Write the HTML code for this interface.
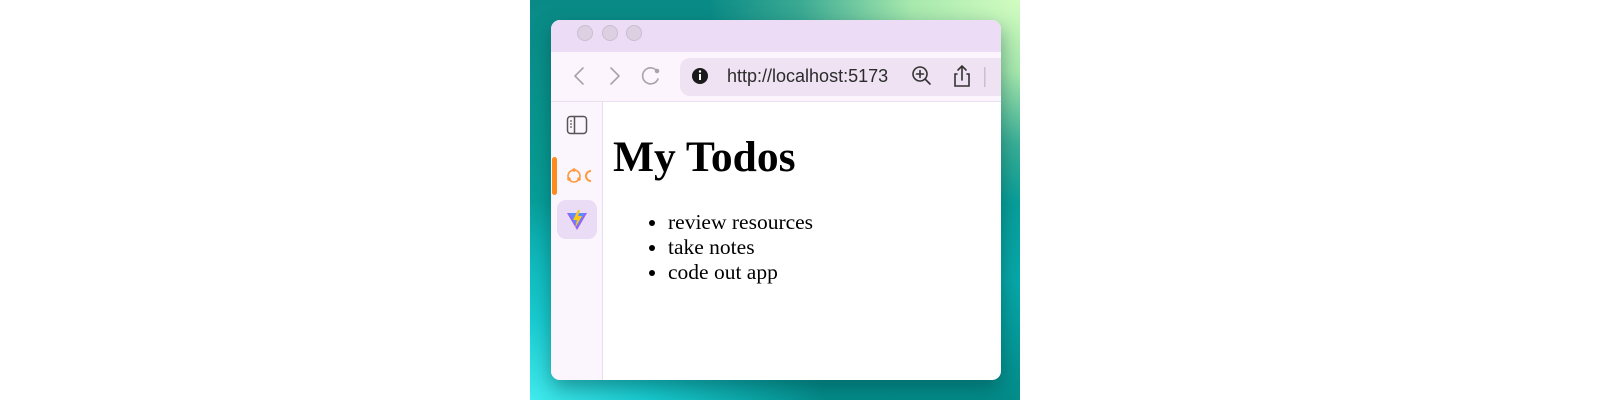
<!DOCTYPE html>
<html><head><meta charset="utf-8"><style>
body{margin:0;width:1600px;height:400px;background:#fff;position:relative;overflow:hidden}
.bg{position:absolute;left:530px;top:0;width:490px;height:400px;overflow:hidden;
background:
radial-gradient(ellipse 75% 60% at 100% 0%,#d2fcc0 0%,#a6e8ad 30%,rgba(90,190,155,0.6) 60%,rgba(60,170,150,0) 85%),
radial-gradient(ellipse 60% 50% at 0% 100%,#40eaee 0%,#18cdd2 40%,rgba(10,190,195,0) 100%),
linear-gradient(180deg,#0a8a86 0%,#079a92 40%,#07a8aa 70%,#038c8a 100%)}
.win{position:absolute;left:551px;top:20px;width:450px;height:360px;border-radius:9px;overflow:hidden;background:#fff;box-shadow:0 8px 20px rgba(0,60,60,.45)}
.title{position:absolute;left:0;top:0;right:0;height:32px;background:#ecdcf6}
.dot{position:absolute;top:5px;width:14px;height:14px;border-radius:50%;background:#dcd0e2;border:.5px solid #c9bdd0}
.tool{position:absolute;left:0;top:32px;right:0;height:49px;background:#fcf5fd;border-bottom:1px solid #eadff0}
.url{position:absolute;left:129px;top:6px;width:360px;height:38px;border-radius:10px;background:#eee2f3}
.side{position:absolute;left:0;top:82px;width:51px;bottom:0;background:#fbf5fd;border-right:1px solid #ecdcef}
.content{position:absolute;left:52px;top:82px;right:0;bottom:0;font-family:"Liberation Serif",serif;color:#000}
h1{position:absolute;left:10px;top:30px;margin:0;font-size:43.5px;font-weight:bold;white-space:nowrap}
ul{position:absolute;left:65px;top:108px;margin:0;padding:0;font-size:21.5px;line-height:25px;white-space:nowrap}
</style></head><body>
<div class="bg"></div>
<div class="win">
 <div class="title">
  <div class="dot" style="left:26px"></div><div class="dot" style="left:51px"></div><div class="dot" style="left:75px"></div>
 </div>
 <div class="tool">
  <svg style="position:absolute;left:0;top:0" width="460" height="49" fill="none" stroke="#a9a2ad" stroke-width="1.6" stroke-linecap="round" stroke-linejoin="round">
   <path d="M32 16 L24 24 L32 32"/>
   <path d="M60 16 L68 24 L60 32"/>
   <path d="M106 19 A8 8 0 1 0 107 27"/><circle cx="106" cy="19" r="1.5" fill="#a9a2ad"/>
  </svg>
  <div class="url">
   <svg style="position:absolute;left:0;top:0" width="360" height="38">
    <circle cx="20" cy="18" r="8" fill="#1a1a1a"/>
    <rect x="19" y="16" width="2" height="6" fill="#fff"/><circle cx="20" cy="13.5" r="1.2" fill="#fff"/>
    <g fill="none" stroke="#333" stroke-width="1.6" stroke-linecap="round">
     <circle cx="240" cy="16" r="7"/><path d="M245 21 L250 26 M240 12.5 V19.5 M236.5 16 H243.5"/>
     <path d="M277 16 H275 V28 H289 V16 H287 M282 22 V8 M278 12 L282 8 L286 12"/>
    </g>
    <rect x="304" y="9" width="1.5" height="20" fill="#c9c0cc"/>
   </svg>
   <div style="position:absolute;left:47px;top:8px;font:18px 'Liberation Sans',sans-serif;color:#2b2b2b">http://localhost:5173</div>
  </div>
 </div>
 <div class="side">
  <svg style="position:absolute;left:0;top:0" width="51" height="170">
   <rect x="16.5" y="14.5" width="19" height="17" rx="3" fill="none" stroke="#555" stroke-width="1.5"/>
   <path d="M23.5 15 V31" stroke="#555" stroke-width="1.5"/>
   <circle cx="20" cy="19" r=".9" fill="#555"/><circle cx="20" cy="22" r=".9" fill="#555"/><circle cx="20" cy="25" r=".9" fill="#555"/>
   <rect x="1" y="55" width="5" height="38" rx="2.5" fill="#ff8a1e"/>
   <circle cx="23" cy="74" r="6" fill="none" stroke="#ff9a3e" stroke-width="1.6"/>
   <circle cx="23" cy="68" r="1.8" fill="#ff9a3e"/><circle cx="28" cy="77" r="1.8" fill="#ff9a3e"/><circle cx="18" cy="77" r="1.8" fill="#ff9a3e"/>
   <path d="M40 69 A5 5 0 0 0 40 79" fill="none" stroke="#ff9a3e" stroke-width="2"/>
   <rect x="6" y="98" width="40" height="39" rx="9" fill="#ebdcf6"/>
   <path d="M16 111 L36 111 L26 128 Z" fill="#9b5cf6"/>
   <path d="M18 111 L34 111 L26 125 Z" fill="#41a3ff" opacity=".7"/>
   <path d="M27 108 L22 118 H26 L24 126 L31 114 H27 L29 108 Z" fill="#ffc517"/>
  </svg>
 </div>
 <div class="content">
  <h1>My Todos</h1>
  <ul><li>review resources</li><li>take notes</li><li>code out app</li></ul>
 </div>
</div>
</body></html>
